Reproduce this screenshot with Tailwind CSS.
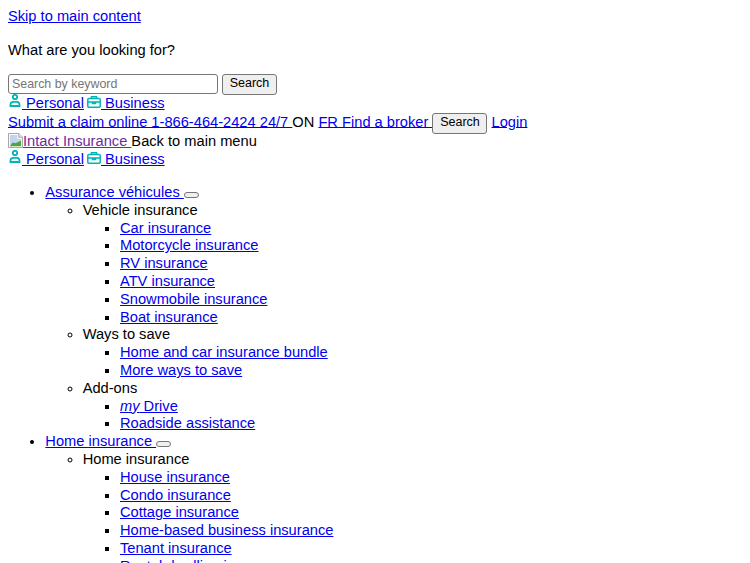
<!DOCTYPE html>
<html lang="en">
<head>
    <meta charset="UTF-8">
    <meta name="viewport" content="width=device-width, initial-scale=1.0">
    <title>Intact Insurance</title>
    <script src="https://cdn.jsdelivr.net/npm/@tailwindcss/browser@4"></script>
</head>
<body class="h-screen overflow-hidden bg-white text-black font-['Liberation_Sans',Arial,sans-serif] text-[14.667px] leading-[17.8px]">
    <div class="p-2">
        <div><a href="#main" class="text-[#0000ee] underline">Skip to main content</a></div>

        <p class="mt-[16px] mb-[14px]">What are you looking for?</p>
        <form class="flex items-center gap-1 h-[21px]">
            <input type="text" placeholder="Search by keyword" class="w-[210px] h-[20px] px-[3px] border border-[#767676] rounded-[3px] text-[12.4px] placeholder:text-[#757575]">
            <button type="button" class="w-[55px] h-[21px] border border-[#767676] rounded-[3px] bg-[#efefef] text-[12.5px]">Search</button>
        </form>

        <div class="h-[18px] leading-[16.4px]">
            <a href="#" class="text-[#0000ee] underline"><svg class="inline-block w-[14px] h-[13px] align-[0px] -translate-y-[1px] text-[#00b5b5]" viewBox="0 0 14 13" fill="none" stroke="currentColor" stroke-width="1.8"><circle cx="7" cy="3" r="2.2"/><path d="M2.5 12v-1.4a2.8 2.8 0 0 1 2.8-2.8h3.4a2.8 2.8 0 0 1 2.8 2.8V12z"/></svg> Personal</a>
            <a href="#" class="-ml-[1px] text-[#0000ee] underline"><svg class="inline-block w-[14px] h-[12px] align-[0px] text-[#00b5b5]" viewBox="0 0 14 12" fill="none" stroke="currentColor" stroke-width="1.5"><rect x="0.8" y="2.4" width="12.4" height="8.8" rx="1"/><path d="M4.5 2.4V0.8h5v1.6M0.8 6h12.4M5.5 6v1.5h3V6"/></svg> Business</a>
        </div>

        <div class="h-[20px]">
            <a href="#" class="text-[#0000ee] underline">Submit a claim online 1-866-464-2424 24/7 </a>
            <span>ON</span>
            <a href="#" class="text-[#0000ee] underline">FR Find a broker </a>
            <button type="button" class="w-[55px] h-[21px] border border-[#767676] rounded-[3px] bg-[#efefef] text-[12.5px]">Search</button>
            <a href="#" class="text-[#0000ee] underline">Login</a>
        </div>

        <div class="h-[18px]">
            <a href="#" class="text-[#6b2d9c] underline"><svg class="inline-block w-[15px] h-[15px] align-[-2px]" viewBox="0 0 16 16"><path d="M0.5 0.5h11l4 4v11h-15z" fill="#fff" stroke="#a0a0a0"/><path d="M11.5 0.5v4h4" fill="#e8e8e8" stroke="#a0a0a0"/><path d="M2 2h8v4h4v3l-5 2-4 3H2z" fill="#c3d4f0"/><path d="M2 14l3-4 3 1 6-3v6z" fill="#4fa53a"/></svg>Intact Insurance </a>
            <span>Back to main menu</span>
        </div>

        <div class="h-[18px] leading-[16.4px]">
            <a href="#" class="text-[#0000ee] underline"><svg class="inline-block w-[14px] h-[13px] align-[0px] -translate-y-[1px] text-[#00b5b5]" viewBox="0 0 14 13" fill="none" stroke="currentColor" stroke-width="1.8"><circle cx="7" cy="3" r="2.2"/><path d="M2.5 12v-1.4a2.8 2.8 0 0 1 2.8-2.8h3.4a2.8 2.8 0 0 1 2.8 2.8V12z"/></svg> Personal</a>
            <a href="#" class="-ml-[1px] text-[#0000ee] underline"><svg class="inline-block w-[14px] h-[12px] align-[0px] text-[#00b5b5]" viewBox="0 0 14 12" fill="none" stroke="currentColor" stroke-width="1.5"><rect x="0.8" y="2.4" width="12.4" height="8.8" rx="1"/><path d="M4.5 2.4V0.8h5v1.6M0.8 6h12.4M5.5 6v1.5h3V6"/></svg> Business</a>
        </div>

        <ul class="my-[15.4px] pl-[37.33px] list-disc">
            <li>
                <a href="#" class="text-[#0000ee] underline">Assurance véhicules </a>
                <button type="button" class="w-[15px] h-[6px] border border-[#767676] rounded-[3px] bg-[#efefef]"></button>
                <ul class="pl-[37.33px] list-[circle]">
                    <li>Vehicle insurance
                        <ul class="pl-[37.33px] list-[square]">
                            <li><a href="#" class="text-[#0000ee] underline">Car insurance</a></li>
                            <li><a href="#" class="text-[#0000ee] underline">Motorcycle insurance</a></li>
                            <li><a href="#" class="text-[#0000ee] underline">RV insurance</a></li>
                            <li><a href="#" class="text-[#0000ee] underline">ATV insurance</a></li>
                            <li><a href="#" class="text-[#0000ee] underline">Snowmobile insurance</a></li>
                            <li><a href="#" class="text-[#0000ee] underline">Boat insurance</a></li>
                        </ul>
                    </li>
                    <li>Ways to save
                        <ul class="pl-[37.33px] list-[square]">
                            <li><a href="#" class="text-[#0000ee] underline">Home and car insurance bundle</a></li>
                            <li><a href="#" class="text-[#0000ee] underline">More ways to save</a></li>
                        </ul>
                    </li>
                    <li>Add-ons
                        <ul class="pl-[37.33px] list-[square]">
                            <li><a href="#" class="text-[#0000ee] underline"><em>my</em> Drive</a></li>
                            <li><a href="#" class="text-[#0000ee] underline">Roadside assistance</a></li>
                        </ul>
                    </li>
                </ul>
            </li>
            <li>
                <a href="#" class="text-[#0000ee] underline">Home insurance </a>
                <button type="button" class="w-[15px] h-[6px] border border-[#767676] rounded-[3px] bg-[#efefef]"></button>
                <ul class="pl-[37.33px] list-[circle]">
                    <li>Home insurance
                        <ul class="pl-[37.33px] list-[square]">
                            <li><a href="#" class="text-[#0000ee] underline">House insurance</a></li>
                            <li><a href="#" class="text-[#0000ee] underline">Condo insurance</a></li>
                            <li><a href="#" class="text-[#0000ee] underline">Cottage insurance</a></li>
                            <li><a href="#" class="text-[#0000ee] underline">Home-based business insurance</a></li>
                            <li><a href="#" class="text-[#0000ee] underline">Tenant insurance</a></li>
                            <li><a href="#" class="text-[#0000ee] underline">Rental dwelling insurance</a></li>
                        </ul>
                    </li>
                </ul>
            </li>
        </ul>
    </div>
</body>
</html>
